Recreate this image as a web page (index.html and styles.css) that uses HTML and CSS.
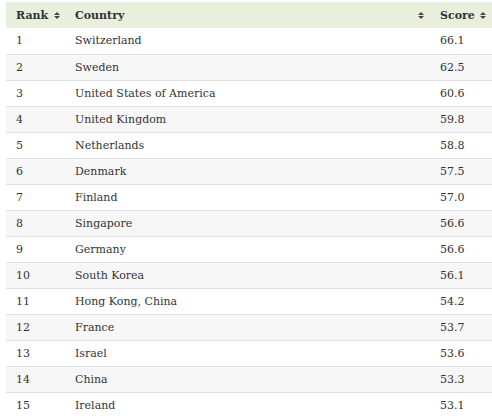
FILE: index.html
```html
<!DOCTYPE html>
<html>
<head>
<meta charset="utf-8">
<link rel="stylesheet" href="styles.css">
</head>
<body>
<table class="rank-table">
  <thead>
    <tr>
      <th class="col-rank"><span class="th-in">Rank <span class="sort"></span></span></th>
      <th class="col-country"><span class="th-in">Country <span class="sort"></span></span></th>
      <th class="col-score"><span class="th-in">Score <span class="sort"></span></span></th>
    </tr>
  </thead>
  <tbody>
    <tr><td>1</td><td>Switzerland</td><td>66.1</td></tr>
    <tr><td>2</td><td>Sweden</td><td>62.5</td></tr>
    <tr><td>3</td><td>United States of America</td><td>60.6</td></tr>
    <tr><td>4</td><td>United Kingdom</td><td>59.8</td></tr>
    <tr><td>5</td><td>Netherlands</td><td>58.8</td></tr>
    <tr><td>6</td><td>Denmark</td><td>57.5</td></tr>
    <tr><td>7</td><td>Finland</td><td>57.0</td></tr>
    <tr><td>8</td><td>Singapore</td><td>56.6</td></tr>
    <tr><td>9</td><td>Germany</td><td>56.6</td></tr>
    <tr><td>10</td><td>South Korea</td><td>56.1</td></tr>
    <tr><td>11</td><td>Hong Kong, China</td><td>54.2</td></tr>
    <tr><td>12</td><td>France</td><td>53.7</td></tr>
    <tr><td>13</td><td>Israel</td><td>53.6</td></tr>
    <tr><td>14</td><td>China</td><td>53.3</td></tr>
    <tr><td>15</td><td>Ireland</td><td>53.1</td></tr>
  </tbody>
</table>
</body>
</html>
```
FILE: styles.css
```css
html, body {
  margin: 0;
  background: #ffffff;
}
body {
  padding: 2px 0 0 6px;
  font-family: "DejaVu Serif", "Liberation Serif", serif;
  font-size: 11px;
  color: #333333;
}
.rank-table {
  border-collapse: collapse;
  width: 486px;
  table-layout: fixed;
}
th, td {
  box-sizing: border-box;
  height: 26px;
  padding: 0 0 0 10px;
  text-align: left;
  vertical-align: middle;
  white-space: nowrap;
}
.col-rank { width: 59px; }
.col-score { width: 62px; }
thead th {
  background: #e8efdd;
  font-weight: bold;
  height: 26px;
}
.th-in {
  display: flex;
  align-items: center;
  justify-content: space-between;
  padding-right: 6px;
}
.col-rank .th-in { justify-content: flex-start; gap: 6px; }
.sort {
  display: inline-flex;
  flex-direction: column;
  gap: 1px;
  width: 6px;
}
.sort::before, .sort::after {
  content: "";
  width: 0;
  height: 0;
  border-left: 3px solid transparent;
  border-right: 3px solid transparent;
}
.sort::before { border-bottom: 3px solid #444; }
.sort::after { border-top: 3px solid #444; }
tbody td {
  border-top: 1px solid #e2e2e2;
}
tbody tr:nth-child(even) td {
  background: #f7f7f7;
}
tbody tr:first-child td { border-top: none; }
```
